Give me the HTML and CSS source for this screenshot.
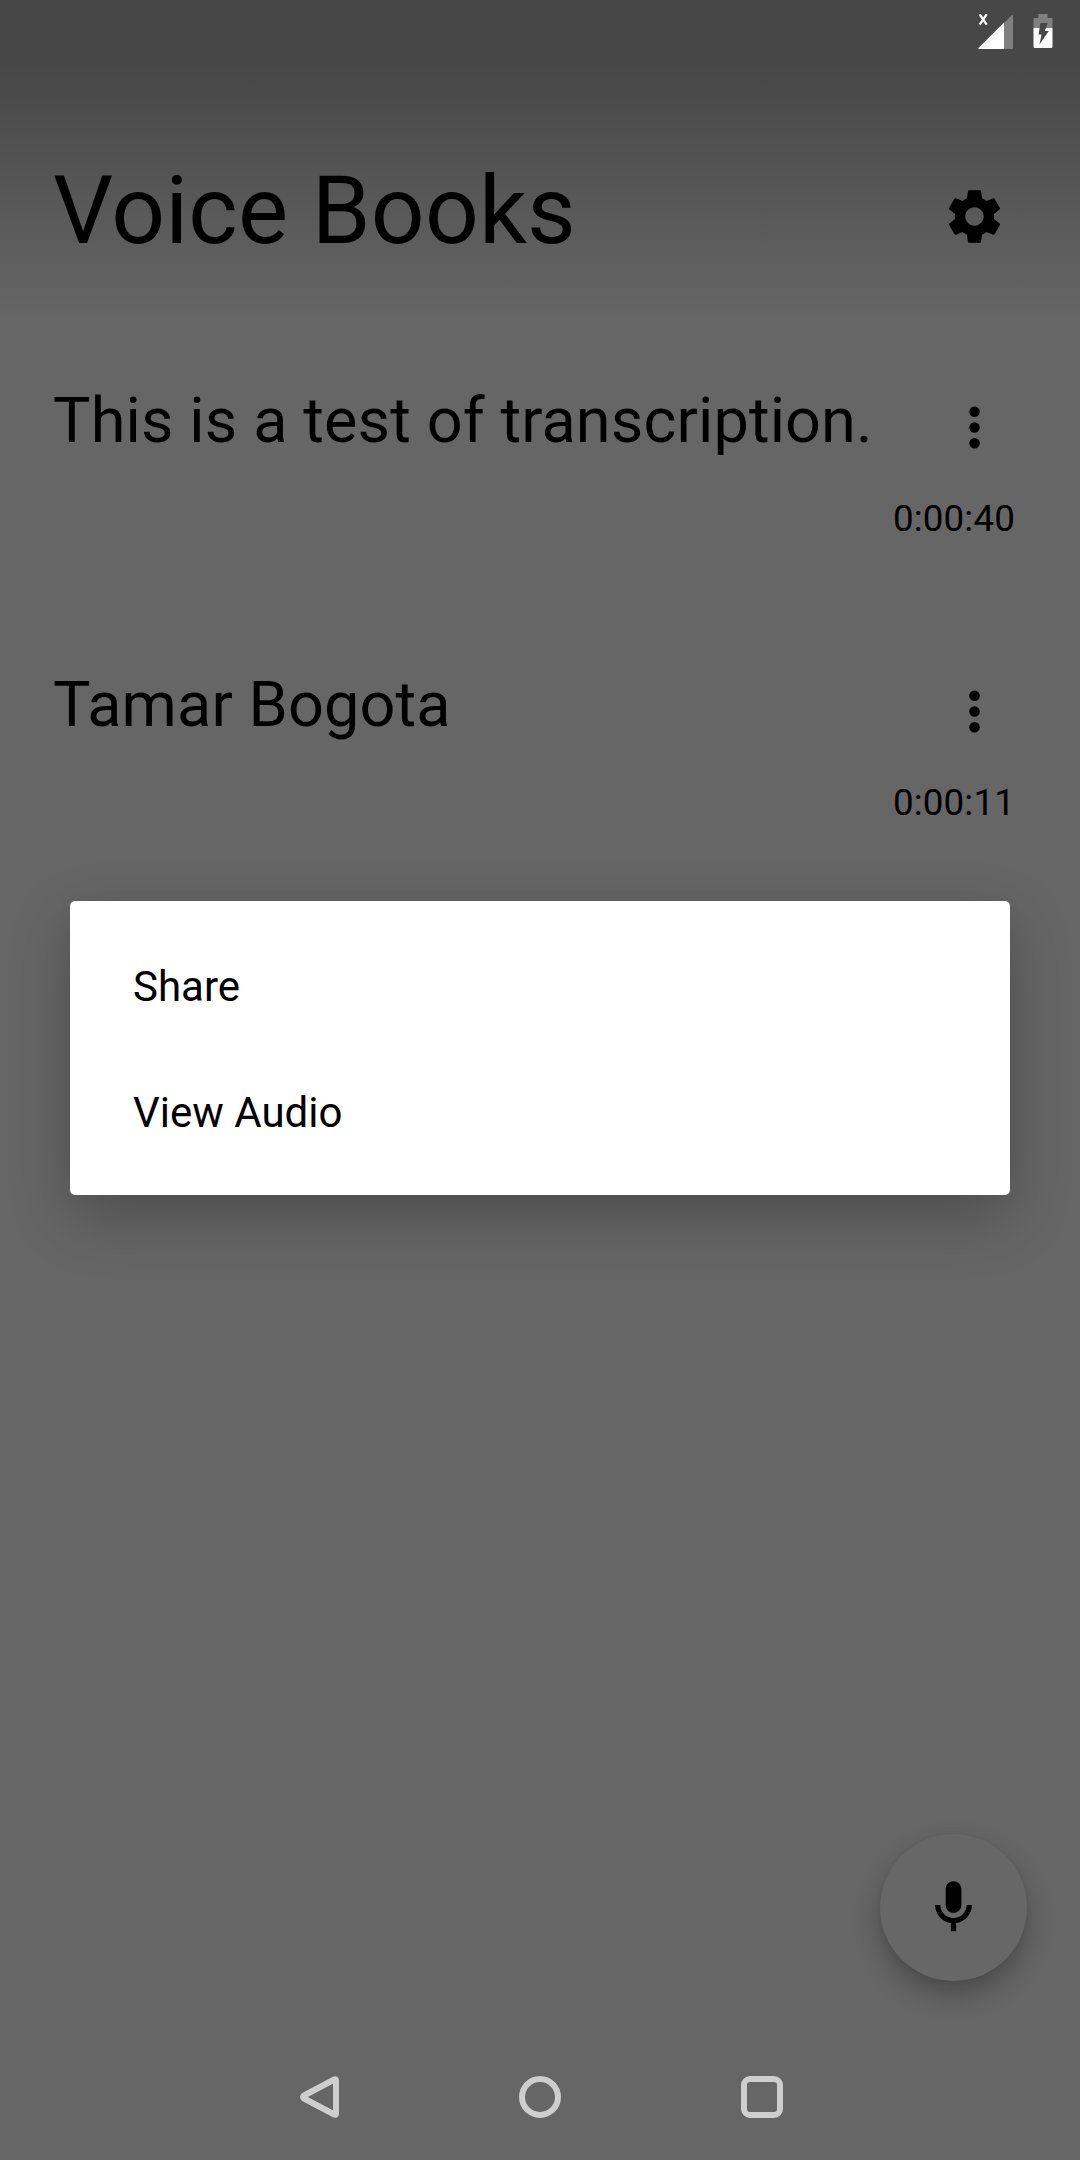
FILE: index.html
```html
<!DOCTYPE html>
<html lang="en">
<head>
<meta charset="utf-8">
<title>Voice Books</title>
<link rel="stylesheet" href="styles.css">
</head>
<body>
<div class="screen">
  <div class="status-bar">
    <svg class="signal" width="36" height="36" viewBox="0 0 36 36">
      <path d="M26 9L33.500 1.500Q35 0 35 2V34q0 1-1 1H26z" fill="#808080"/>
      <path d="M1 35Q0 35 .5 34L26 8.500V35z" fill="#fff"/>
      <path d="M1.700 .3L8.700 10.700M8.700 .3L1.700 10.700" stroke="#fff" stroke-width="2.300"/>
    </svg>
    <svg class="battery" width="20" height="34" viewBox="0 0 20 34">
      <path d="M5.300 0h9.200v4H18.500q1 0 1 1V14H.5V5q0-1 1-1h3.800z" fill="#808080"/>
      <path d="M.5 14h19V32.500q0 1.500-1.500 1.500H2Q.5 34 .5 32.500z" fill="#fff"/>
      <path d="M7.500 9H14.700L11.800 17H15.800L6.500 30.500L8.500 20.500H5.500z" fill="#474747"/>
    </svg>
  </div>
  <header class="header">
    <h1 class="title">Voice Books</h1>
    <svg class="icon" viewBox="0 0 24 24"><path d="M19.430 12.980c.04-.32.07-.64.07-.98s-.03-.66-.07-.98l2.110-1.650c.19-.15.24-.42.12-.64l-2-3.460c-.12-.22-.39-.3-.61-.22l-2.490 1c-.52-.4-1.080-.73-1.690-.98l-.38-2.650C14.460 2.180 14.250 2 14 2h-4c-.25 0-.46.18-.49.42l-.38 2.650c-.61.25-1.170.59-1.690.98l-2.490-1c-.23-.09-.49 0-.61.22l-2 3.460c-.13.22-.07.49.12.64l2.110 1.650c-.04.32-.07.65-.07.98s.03.66.07.98l-2.110 1.650c-.19.15-.24.42-.12.64l2 3.460c.12.22.39.3.61.22l2.490-1c.52.4 1.080.73 1.690.98l.38 2.650c.03.24.24.42.49.42h4c.25 0 .46-.18.49-.42l.38-2.650c.61-.25 1.170-.59 1.690-.98l2.490 1c.23.09.49 0 .61-.22l2-3.460c.12-.22.07-.49-.12-.64l-2.110-1.650zM12 15.500c-1.930 0-3.500-1.570-3.500-3.500s1.570-3.500 3.500-3.500 3.500 1.570 3.500 3.500-1.570 3.500-3.500 3.500z"/></svg>
  </header>
  <main class="list">
    <article class="book">
      <div class="book-head">
        <h2 class="book-title">This is a test of transcription.</h2>
        <svg class="icon" viewBox="0 0 24 24"><circle cx="12" cy="6" r="2"/><circle cx="12" cy="12" r="2"/><circle cx="12" cy="18" r="2"/></svg>
      </div>
      <time class="duration">0:00:40</time>
    </article>
    <article class="book">
      <div class="book-head">
        <h2 class="book-title">Tamar Bogota</h2>
        <svg class="icon" viewBox="0 0 24 24"><circle cx="12" cy="6" r="2"/><circle cx="12" cy="12" r="2"/><circle cx="12" cy="18" r="2"/></svg>
      </div>
      <time class="duration">0:00:11</time>
    </article>
  </main>
  <button class="fab" aria-label="Record">
    <svg class="mic" viewBox="0 0 24 24"><path d="M12 14c1.660 0 3-1.340 3-3V5c0-1.660-1.340-3-3-3S9 3.340 9 5v6c0 1.660 1.340 3 3 3zM17 11c0 2.760-2.240 5-5 5s-5-2.240-5-5H5c0 3.530 2.610 6.430 6 6.920V21h2v-3.080c3.390-.49 6-3.390 6-6.920z"/></svg>
  </button>
  <nav class="nav-bar">
    <svg class="nav-icon" viewBox="0 0 42 42"><path d="M39 4.500Q39 2.500 37.300 3.500L7 19.500Q5 21 7 22.500L37.300 38.500Q39 39.500 39 37.500z"/></svg>
    <svg class="nav-icon" viewBox="0 0 42 42"><circle cx="21" cy="21" r="18"/></svg>
    <svg class="nav-icon" viewBox="0 0 42 42"><rect x="3" y="3" width="36" height="36" rx="6"/></svg>
  </nav>
  <div class="dialog" role="menu">
    <div class="option" role="menuitem">Share</div>
    <div class="option" role="menuitem">View Audio</div>
  </div>
</div>
</body>
</html>
```
FILE: styles.css
```css
* { box-sizing: border-box; }

body {
  margin: 0;
  font-family: Roboto, sans-serif;
  color: #000;
}

.screen {
  position: relative;
  display: flex;
  flex-direction: column;
  width: 1080px;
  height: 2160px;
  overflow: hidden;
  background: linear-gradient(#474747 0, #474747 63px, #666 320px);
}

.status-bar {
  display: flex;
  align-items: flex-start;
  justify-content: flex-end;
  gap: 19px;
  height: 63px;
  padding: 14px 27.5px 0 0;
}

.header {
  display: flex;
  align-items: center;
  justify-content: space-between;
  height: 257px;
  padding: 0 74px 0 53px;
}

.title {
  margin: 37px 0 0;
  font-size: 94.5px;
  font-weight: 400;
  letter-spacing: .15px;
  line-height: 111px;
}

.header .icon { margin-top: 50px; }

.icon {
  flex: none;
  width: 63px;
  height: 63px;
}

.list {
  display: flex;
  flex: 1;
  flex-direction: column;
}

.book {
  height: 284px;
  padding: 64px 65px 0 53px;
}

.book-head {
  display: flex;
  align-items: center;
  justify-content: space-between;
  height: 74px;
  padding-right: 9px;
}

.book-head .icon { margin-top: 13px; }

.book-title {
  margin: 0;
  font-size: 63px;
  font-weight: 400;
  letter-spacing: .12px;
  line-height: 74px;
}

.duration {
  display: block;
  margin-top: 39px;
  font-size: 36.75px;
  letter-spacing: .15px;
  line-height: 43px;
  text-align: right;
}

.fab {
  display: flex;
  align-items: center;
  justify-content: center;
  align-self: flex-end;
  width: 147px;
  height: 147px;
  margin: 0 53px 53px 0;
  padding: 0;
  border: 0;
  border-radius: 50%;
  background: #676767;
  box-shadow: 0 13px 26px rgba(0, 0, 0, .27), 0 1px 5px rgba(0, 0, 0, .06);
}

.mic {
  width: 63px;
  height: 63px;
}

.nav-bar {
  display: flex;
  align-items: center;
  justify-content: center;
  gap: 180px;
  height: 126px;
}

.nav-icon {
  width: 42px;
  height: 42px;
  fill: none;
  stroke: #cecece;
  stroke-width: 6;
  stroke-linejoin: round;
}

.dialog {
  position: absolute;
  top: 901px;
  left: 70px;
  width: 940px;
  height: 294px;
  padding: 23px 0 19px;
  border-radius: 5px;
  background: #fff;
  box-shadow: 0 22px 62px rgba(0, 0, 0, .23), 0 0 14px rgba(0, 0, 0, .05);
}

.option {
  height: 126px;
  padding-left: 63px;
  font-size: 42px;
  line-height: 126px;
}
```
